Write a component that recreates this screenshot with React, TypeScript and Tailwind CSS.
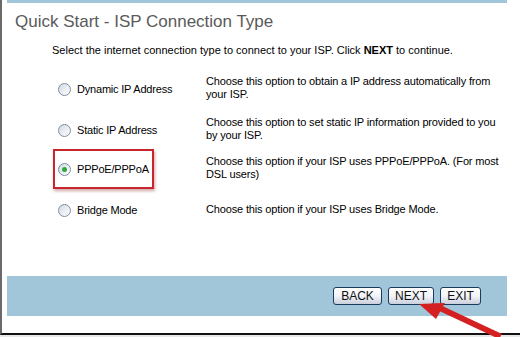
import React from "react";

function Radio({ checked }: { checked?: boolean }) {
  return (
    <span className="relative inline-block w-[13px] h-[13px] rounded-full border border-[#7b8da0] bg-gradient-to-br from-[#d3dae3] to-[#ffffff] shrink-0">
      {checked && (
        <span className="absolute left-[3px] top-[3px] w-[5px] h-[5px] rounded-full bg-[#2fa83a]" />
      )}
    </span>
  );
}

function Btn({ label, w }: { label: string; w: string }) {
  return (
    <div
      className={`${w} h-[18px] rounded-[3px] border border-[#1c3a5e] bg-gradient-to-b from-[#ffffff] via-[#f3f4f8] to-[#c9cfdc] flex items-center justify-center text-[12px] text-[#111]`}
    >
      {label}
    </div>
  );
}

const rows = [
  {
    label: "Dynamic IP Address",
    desc: ["Choose this option to obtain a IP address automatically from", "your ISP."],
    mt: "mt-0",
  },
  {
    label: "Static IP Address",
    desc: ["Choose this option to set static IP information provided to you", "by your ISP."],
    mt: "mt-[15px]",
  },
  {
    label: "PPPoE/PPPoA",
    desc: ["Choose this option if your ISP uses PPPoE/PPPoA. (For most", "DSL users)"],
    mt: "mt-[13px]",
    checked: true,
  },
  {
    label: "Bridge Mode",
    desc: ["Choose this option if your ISP uses Bridge Mode."],
    mt: "mt-[20px]",
  },
];

export default function App() {
  return (
    <div
      className="relative w-[520px] h-[337px] bg-white overflow-hidden"
      style={{ fontFamily: '"Liberation Sans", Arial, sans-serif' }}
    >
      <div className="flex flex-col h-[335px] border-l-2 border-[#6a6a6a] border-b-2 border-b-[#111]">
        <div className="ml-[5px] w-[500px] h-[3px] bg-[#a1c6d9]" />
        <div className="pl-[13px] pt-[9px] text-[17px] leading-[20px] text-[#5a5a5a]">
          Quick Start - ISP Connection Type
        </div>
        <div className="pl-[50px] pt-[12px] text-[11px] leading-[13px] text-black">
          Select the internet connection type to connect to your ISP. Click <b>NEXT</b> to continue.
        </div>
        <div className="flex flex-col pt-[18px]">
          {rows.map((r) => (
            <div key={r.label} className={`flex items-center ${r.mt}`}>
              <div className="w-[204px] pl-[51px] relative">
                <div className="flex items-center gap-[6px] h-[16px] pt-[3px] pl-[5px] text-[11px] text-black">
                  <Radio checked={r.checked} />
                  <span className="tracking-[-0.2px]">{r.label}</span>
                </div>
                {r.checked && (
                  <div className="absolute left-[51px] top-[-11px] w-[101px] h-[40px] border-2 border-[#c8262c] shadow-[1px_2px_3px_rgba(120,0,0,0.35)]" />
                )}
              </div>
              <div className="text-[11px] leading-[13px] text-black tracking-[-0.15px]">
                {r.desc.map((d) => (
                  <div key={d}>{d}</div>
                ))}
              </div>
            </div>
          ))}
        </div>
        <div className="flex-1" />
        <div className="ml-[5px] mb-[17px] w-[500px] h-[40px] bg-[#a1c6d9] flex items-center justify-end pr-[26px] gap-[6px]">
          <Btn label="BACK" w="w-[49px]" />
          <Btn label="NEXT" w="w-[46px]" />
          <Btn label="EXIT" w="w-[41px]" />
        </div>
      </div>
      <div className="h-[2px] bg-[#e8e8e8]" />
      <svg className="absolute left-0 top-0" width="520" height="337" viewBox="0 0 520 337">
        <polygon points="433,308 436,303 502,334 499,339" fill="#d42020" />
        <polygon points="419,304 445,303 436,319" fill="#d42020" />
      </svg>
    </div>
  );
}
